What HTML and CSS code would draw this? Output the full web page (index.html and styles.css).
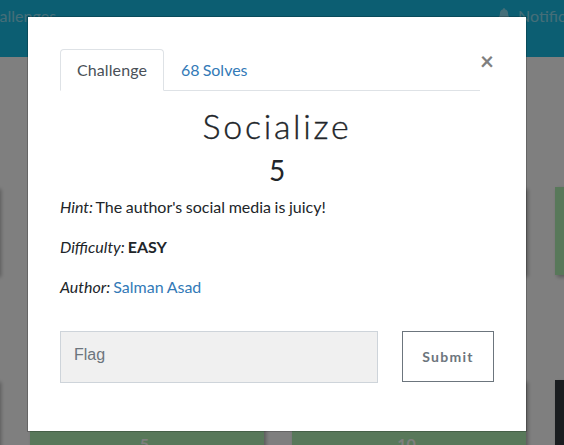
FILE: index.html
```
<!DOCTYPE html>
<html lang="en">
<head>
<meta charset="utf-8">
<title>Challenges</title>
<link rel="stylesheet" href="styles.css">
</head>
<body>
<div class="page">
  <nav class="navbar">
    <span class="nav-left">Challenges</span>
    <span class="nav-right">
      <svg class="bell" viewBox="0 0 448 512"><path fill="currentColor" d="M224 512c35 0 64-29 64-64H160c0 35 29 64 64 64zm215-150c-19-21-55-52-55-154 0-78-54-140-128-155V32a32 32 0 1 0-64 0v21C118 68 64 130 64 208c0 102-36 133-55 154-6 6-9 14-9 22 0 16 13 32 32 32h384c19 0 32-16 32-32 0-8-3-16-9-22z"/></svg>
      <span>Notifications</span>
    </span>
  </nav>
  <main class="board">
    <div class="card solved"></div><div class="card solved"></div><div class="card solved"></div><div class="card solved"></div>
    <div class="card"></div><div class="card solved">5</div><div class="card solved">10</div><div class="card"></div>
  </main>
</div>
<div class="backdrop"></div>
<section class="modal">
  <header class="modal-top">
    <div class="tabs">
      <a class="tab active">Challenge</a>
      <a class="tab">68 Solves</a>
    </div>
    <span class="close">×</span>
  </header>
  <h2 class="name">Socialize</h2>
  <h3 class="value">5</h3>
  <div class="description">
    <p><em>Hint:</em> The author's social media is juicy!</p>
    <p><em>Difficulty:</em> <strong>EASY</strong></p>
    <p><em>Author:</em> <a>Salman Asad</a></p>
  </div>
  <div class="submit-row">
    <input class="flag" type="text" placeholder="Flag">
    <button class="submit">Submit</button>
  </div>
</section>
</body>
</html>
```
FILE: styles.css
```
* { box-sizing: border-box; }
body {
  margin: 0;
  height: 445px;
  overflow: hidden;
  position: relative;
  font: 16px/24px Lato, sans-serif;
  color: #212529;
}
.page { height: 445px; overflow: hidden; background: #fff; }
.navbar {
  height: 57px;
  padding: 4px 0;
  display: flex;
  justify-content: space-between;
  background: #18bce4;
  color: rgba(255, 255, 255, .5);
  white-space: nowrap;
}
.nav-left { margin-left: -20px; }
.nav-right { display: flex; width: 66px; gap: 8px; }
.bell { width: 12px; height: 13px; margin-top: 4px; flex: none; }
.board {
  display: grid;
  grid-template-columns: 230px 234px 234px 234px;
  grid-auto-rows: 88px;
  column-gap: 28.5px;
  row-gap: 105px;
  margin: 130px 0 0 -231.5px;
}
.board .card:nth-child(4n + 2) { margin-left: 3px; margin-right: -3px; }
.board .card:nth-child(4n + 3) { margin-left: 2.5px; margin-right: -2.5px; }
.board .card:nth-child(4n) { margin-left: 3px; margin-right: -3px; }
.card {
  background: #343a40;
  box-shadow: 2px 2px 4px rgba(0, 0, 0, .3);
  color: rgba(255, 255, 255, .95);
  font-weight: 700;
  text-align: center;
  padding-top: 52px;
  padding-right: 5px;
}
.solved { background: #b0f0b4; }
.backdrop { position: absolute; inset: 0; background: rgba(0, 0, 0, .5); }
.modal {
  position: absolute;
  left: 27px;
  top: 16px;
  width: 500px;
  height: 416px;
  padding: 32px;
  border: 1px solid rgba(0, 0, 0, .2);
  background: #fff;
  background-clip: padding-box;
}
.modal-top { display: flex; }
.tabs {
  display: flex;
  width: 420px;
  height: 42px;
  border-bottom: 1px solid #dee2e6;
}
.tab {
  height: 42px;
  padding: 8px 16px;
  border: 1px solid transparent;
  border-radius: 4px 4px 0 0;
  color: #337ab7;
  word-spacing: -1px;
}
.tab.active {
  width: 104px;
  border-color: #dee2e6 #dee2e6 #fff;
  background: #fff;
  color: #495057;
  letter-spacing: .1px;
}
.close {
  width: 14px;
  text-align: center;
  font-size: 24px;
  font-weight: 700;
  color: #7f7f7f;
}
.name, .value {
  margin: 0;
  text-align: center;
  font-weight: 400;
}
.name {
  padding-top: 14px;
  padding-bottom: 1px;
  font-weight: 300;
  font-size: 34px;
  line-height: 41px;
  letter-spacing: 2.7px;
  -webkit-text-stroke: .35px #212529;
}
.value { margin-top: 6px; font-size: 28px; line-height: 34px; }
.description { margin-top: 8px; word-spacing: -.5px; }
.description em { margin-right: -.6px; }
.description p { margin: 0 0 16px; }
.description a { color: #337ab7; }
.submit-row { display: flex; gap: 24px; margin-top: 32px; }
.flag {
  width: 318px;
  height: 52px;
  padding: 0 13px 5px;
  border: 1px solid #ced4da;
  border-radius: 0;
  background: #f0f0f0;
  font: 16px "Liberation Sans", sans-serif;
}
.flag::placeholder { color: #6c757d; opacity: 1; }
.submit {
  width: 92px;
  height: 51px;
  padding: 0;
  border: 1px solid #6c757d;
  background: #fff;
  color: #6c757d;
  font: 700 14px Lato, sans-serif;
  letter-spacing: 1.3px;
}
```
